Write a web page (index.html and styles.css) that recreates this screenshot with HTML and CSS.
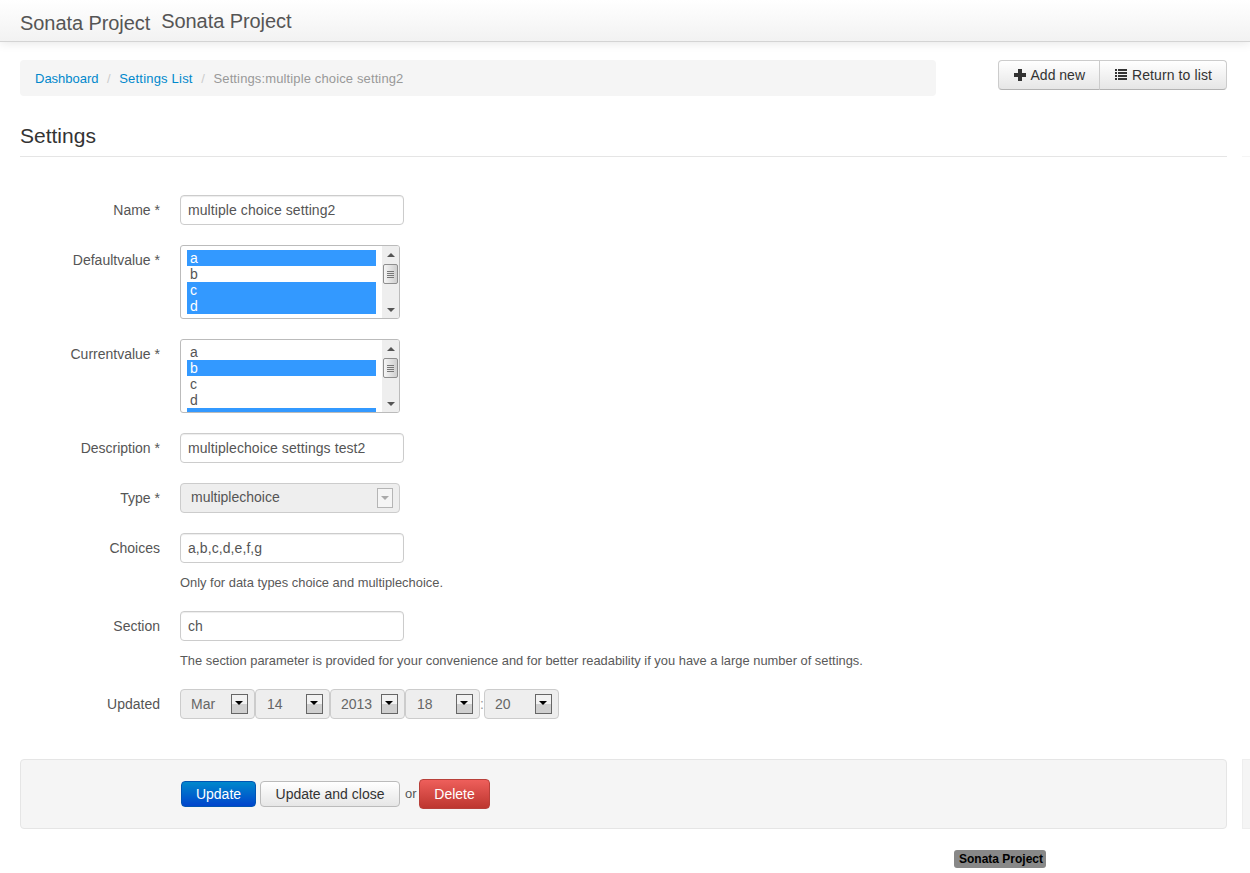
FILE: index.html
```html
<!DOCTYPE html>
<html lang="en">
<head>
    <meta charset="UTF-8">
    <meta name="viewport" content="width=device-width, initial-scale=1.0">
    <title>Settings - Sonata Project</title>
    <link rel="stylesheet" href="styles.css">
</head>
<body>
    <div class="navbar">
        <a class="brand" href="#">Sonata Project</a>
        <a class="brand brand-second" href="#">Sonata Project</a>
    </div>

    <div class="top-row">
        <ul class="breadcrumb">
            <li><a href="#">Dashboard</a><span class="divider">/</span></li>
            <li class="crumb-list"><a href="#">Settings List</a><span class="divider">/</span></li>
            <li class="active">Settings:multiple choice setting2</li>
        </ul>
        <div class="btn-group">
            <a class="btn" href="#">
                <svg class="icon" width="14" height="14" viewBox="0 0 14 14"><path d="M5 1h4v4h4v4H9v4H5V9H1V5h4z" fill="#333"/></svg>
                Add new
            </a>
            <a class="btn" href="#">
                <svg class="icon" width="13" height="14" viewBox="0 0 13 14"><path d="M0 1h2v2H0zM3 1h9v2H3zM0 4h2v2H0zM3 4h9v2H3zM0 7h2v2H0zM3 7h9v2H3zM0 10h2v2H0zM3 10h9v2H3z" fill="#333"/></svg>
                Return to list
            </a>
        </div>
    </div>

    <div class="with-sliver">
        <h1 class="page-title">Settings</h1>
        <div class="sliver sliver-line"></div>
    </div>

    <form class="settings-form">
        <div class="field">
            <label for="name">Name *</label>
            <input type="text" id="name" value="multiple choice setting2">
        </div>

        <div class="field">
            <label>Defaultvalue *</label>
            <div class="listbox">
                <div class="listbox-items">
                    <div class="opt selected">a</div>
                    <div class="opt">b</div>
                    <div class="opt selected">c</div>
                    <div class="opt selected">d</div>
                </div>
                <div class="scrollbar">
                    <span class="arrow-up"></span>
                    <span class="thumb"><i></i><i></i><i></i><i></i></span>
                    <span class="arrow-down"></span>
                </div>
            </div>
        </div>

        <div class="field">
            <label>Currentvalue *</label>
            <div class="listbox">
                <div class="listbox-items">
                    <div class="opt">a</div>
                    <div class="opt selected">b</div>
                    <div class="opt">c</div>
                    <div class="opt">d</div>
                    <div class="opt selected"></div>
                </div>
                <div class="scrollbar">
                    <span class="arrow-up"></span>
                    <span class="thumb"><i></i><i></i><i></i><i></i></span>
                    <span class="arrow-down"></span>
                </div>
            </div>
        </div>

        <div class="field">
            <label for="description">Description *</label>
            <input type="text" id="description" value="multiplechoice settings test2">
        </div>

        <div class="field">
            <label>Type *</label>
            <div class="combo">
                <span>multiplechoice</span>
                <span class="combo-arrow"></span>
            </div>
        </div>

        <div class="field has-help">
            <label for="choices">Choices</label>
            <div>
                <input type="text" id="choices" value="a,b,c,d,e,f,g">
                <p class="help">Only for data types choice and multiplechoice.</p>
            </div>
        </div>

        <div class="field has-help">
            <label for="section">Section</label>
            <div>
                <input type="text" id="section" value="ch">
                <p class="help">The section parameter is provided for your convenience and for better readability if you have a large number of settings.</p>
            </div>
        </div>

        <div class="field">
            <label>Updated</label>
            <div class="date-row">
                <div class="date-select"><span>Mar</span><span class="date-arrow"></span></div>
                <div class="date-select"><span class="pad">14</span><span class="date-arrow"></span></div>
                <div class="date-select"><span>2013</span><span class="date-arrow"></span></div>
                <div class="date-select"><span class="pad">18</span><span class="date-arrow"></span></div>
                <span class="colon">:</span>
                <div class="date-select"><span>20</span><span class="date-arrow"></span></div>
            </div>
        </div>

        <div class="with-sliver actions-row">
            <div class="form-actions">
                <button type="button" class="btn-form btn-primary">Update</button>
                <button type="button" class="btn-form btn-default">Update and close</button>
                <span class="or">or</span>
                <button type="button" class="btn-form btn-danger">Delete</button>
            </div>
            <div class="sliver sliver-box"></div>
        </div>
    </form>

    <div class="page-footer">
        <span class="powered">Sonata Project</span>
    </div>
</body>
</html>
```

FILE: styles.css
```css
html, body {
    height: 873px;
    overflow: hidden;
}
body {
    margin: 0;
    font-family: "Liberation Sans", Arial, sans-serif;
    font-size: 14px;
    line-height: 20px;
    color: #555;
    background-color: #fff;
}
a {
    text-decoration: none;
}

/* navbar */
.navbar {
    display: flex;
    height: 41px;
    padding-left: 20px;
    background: linear-gradient(to bottom, #fff, #f2f2f2);
    border-bottom: 1px solid #d4d4d4;
    box-shadow: 0 1px 10px rgba(0, 0, 0, 0.1);
}
.brand {
    margin-top: 12px;
    font-size: 20px;
    line-height: 22px;
    letter-spacing: -0.07px;
    color: #555;
}
.brand-second {
    margin-top: 10px;
    margin-left: 11px;
}

/* breadcrumb + actions */
.top-row {
    display: flex;
    justify-content: space-between;
    align-items: flex-start;
    margin-top: 18px;
    padding: 0 23px 0 20px;
}
.breadcrumb {
    display: flex;
    width: 886px;
    height: 20px;
    margin: 0;
    padding: 9px 15px 7px;
    list-style: none;
    font-size: 13px;
    line-height: 20px;
    background-color: #f5f5f5;
    border-radius: 4px;
}
.breadcrumb a {
    color: #0088cc;
}
.breadcrumb .divider {
    padding: 0 8.5px;
    color: #ccc;
}
.breadcrumb .crumb-list {
    letter-spacing: 0.2px;
}
.breadcrumb .active {
    letter-spacing: 0.13px;
    color: #999;
}
.btn-group {
    display: flex;
}
.btn {
    display: flex;
    align-items: center;
    gap: 4px;
    height: 28px;
    padding: 0 14px 0 15px;
    color: #333;
    background: linear-gradient(to bottom, #fff, #e6e6e6);
    border: 1px solid #ccc;
    border-bottom-color: #b3b3b3;
}
.btn:first-child {
    padding-left: 14px;
    border-radius: 4px 0 0 4px;
}
.btn:last-child {
    margin-left: -1px;
    border-radius: 0 4px 4px 0;
    letter-spacing: 0.1px;
}
.icon {
    flex: none;
}

/* heading */
.with-sliver {
    display: flex;
    gap: 15px;
    padding-left: 20px;
}
.sliver {
    flex: 0 0 8px;
}
.page-title {
    flex: 0 0 1207px;
    box-sizing: border-box;
    height: 31px;
    margin: 30px 0 0;
    font-size: 21px;
    font-weight: normal;
    line-height: 20px;
    color: #333;
    border-bottom: 1px solid #e5e5e5;
}
.sliver-line {
    margin-top: 60px;
    height: 1px;
    background-color: #f5f5f5;
}

/* form */
.settings-form {
    margin-top: 38px;
}
.field {
    display: flex;
    align-items: flex-start;
    margin-bottom: 20px;
}
.field.has-help {
    margin-bottom: 18px;
}
.field label {
    flex: 0 0 160px;
    box-sizing: border-box;
    padding-top: 5px;
    text-align: right;
    color: #555;
    margin-right: 20px;
}
.field input[type="text"] {
    display: block;
    box-sizing: border-box;
    width: 224px;
    height: 30px;
    padding: 4px 7px;
    font-family: inherit;
    font-size: 14px;
    letter-spacing: 0.08px;
    color: #555;
    background-color: #fff;
    border: 1px solid #ccc;
    border-radius: 4px;
    box-shadow: inset 0 1px 1px rgba(0, 0, 0, 0.075);
}
.help {
    margin: 10px 0 0;
    font-size: 12.9px;
    line-height: 20px;
    color: #595959;
}

/* multi select lists */
.listbox {
    display: flex;
    box-sizing: border-box;
    width: 220px;
    height: 74px;
    background-color: #fff;
    border: 1px solid #bbb;
    border-radius: 3px;
    overflow: hidden;
}
.listbox-items {
    flex: 1;
    height: 68px;
    margin: 4px 6px 0;
    overflow: hidden;
    line-height: 16px;
}
.opt {
    height: 16px;
    padding-left: 3px;
    color: #555;
}
.opt.selected {
    color: #fff;
    background-color: #3399ff;
}
.scrollbar {
    display: flex;
    flex-direction: column;
    align-items: center;
    flex: 0 0 17px;
    background-color: #eee;
}
.arrow-up,
.arrow-down {
    width: 0;
    height: 0;
    border-left: 4px solid transparent;
    border-right: 4px solid transparent;
}
.arrow-up {
    margin-top: 7px;
    border-bottom: 4px solid #555;
}
.arrow-down {
    margin-top: 24px;
    border-top: 4px solid #555;
}
.thumb {
    display: flex;
    flex-direction: column;
    align-items: center;
    justify-content: center;
    gap: 1px;
    box-sizing: border-box;
    width: 15px;
    height: 20px;
    margin-top: 7px;
    background: linear-gradient(to right, #f5f5f5, #cfcfcf);
    border: 1px solid #8e8e8e;
    border-radius: 2px;
}
.thumb i {
    display: block;
    width: 7px;
    height: 1px;
    background-color: #777;
}

/* type select, disabled */
.combo {
    display: flex;
    align-items: center;
    justify-content: space-between;
    box-sizing: border-box;
    width: 220px;
    height: 30px;
    padding: 0 6px 2px 10px;
    color: #555;
    background-color: #eee;
    border: 1px solid #ccc;
    border-radius: 4px;
}
.combo-arrow {
    position: relative;
    box-sizing: border-box;
    width: 16px;
    height: 20px;
    margin-bottom: -2px;
    background-color: #f5f5f5;
    border: 1px solid #b5b5b5;
}
.combo-arrow::after {
    content: "";
    position: absolute;
    left: 3px;
    top: 7px;
    border-left: 4px solid transparent;
    border-right: 4px solid transparent;
    border-top: 4px solid #aaa;
}

/* date selects */
.date-row {
    display: flex;
    align-items: center;
}
.date-select {
    display: flex;
    align-items: center;
    justify-content: space-between;
    box-sizing: border-box;
    width: 75px;
    height: 30px;
    padding: 0 6px 0 10px;
    color: #666;
    background-color: #eee;
    border: 1px solid #ccc;
    border-radius: 4px;
}
.date-select .pad {
    padding-left: 1px;
}
.date-arrow {
    position: relative;
    box-sizing: border-box;
    width: 17px;
    height: 20px;
    background: linear-gradient(to bottom, #f2f2f2 50%, #cfcfcf 50%);
    border: 1px solid #666;
}
.date-arrow::after {
    content: "";
    position: absolute;
    left: 3px;
    top: 6px;
    border-left: 4px solid transparent;
    border-right: 4px solid transparent;
    border-top: 4px solid #000;
}
.colon {
    width: 4px;
    text-align: center;
    color: #999;
}

/* footer actions */
.actions-row {
    margin-top: 40px;
}
.form-actions {
    flex: 0 0 1207px;
    display: flex;
    align-items: center;
    box-sizing: border-box;
    height: 70px;
    padding-left: 160px;
    background-color: #f5f5f5;
    border: 1px solid #e5e5e5;
    border-radius: 4px;
}
.sliver-box {
    box-sizing: border-box;
    height: 70px;
    background-color: #f5f5f5;
    border: 1px solid #eee;
    border-right: none;
}
.btn-form {
    box-sizing: border-box;
    height: 26px;
    padding: 0;
    font-family: inherit;
    font-size: 14px;
    border-radius: 4px;
    border: 1px solid #bbb;
}
.btn-primary {
    width: 75px;
    color: #fff;
    background: linear-gradient(to bottom, #0088cc, #0044cc);
    border-color: #0055b3;
}
.btn-default {
    width: 140px;
    margin-left: 4px;
    color: #333;
    background: linear-gradient(to bottom, #fff, #e6e6e6);
}
.or {
    width: 14px;
    margin-left: 5px;
    font-size: 13px;
    color: #555;
}
.btn-danger {
    width: 71px;
    height: 30px;
    color: #fff;
    background: linear-gradient(to bottom, #ee5f5b, #bd362f);
    border-color: #b8403a;
}

/* bottom */
.page-footer {
    display: flex;
    margin-top: 21px;
    padding-left: 954px;
}
.powered {
    height: 18px;
    padding: 0 3px 0 5px;
    font-size: 12px;
    font-weight: bold;
    line-height: 18px;
    color: #000;
    background-color: #888;
    border-radius: 3px;
}
```
